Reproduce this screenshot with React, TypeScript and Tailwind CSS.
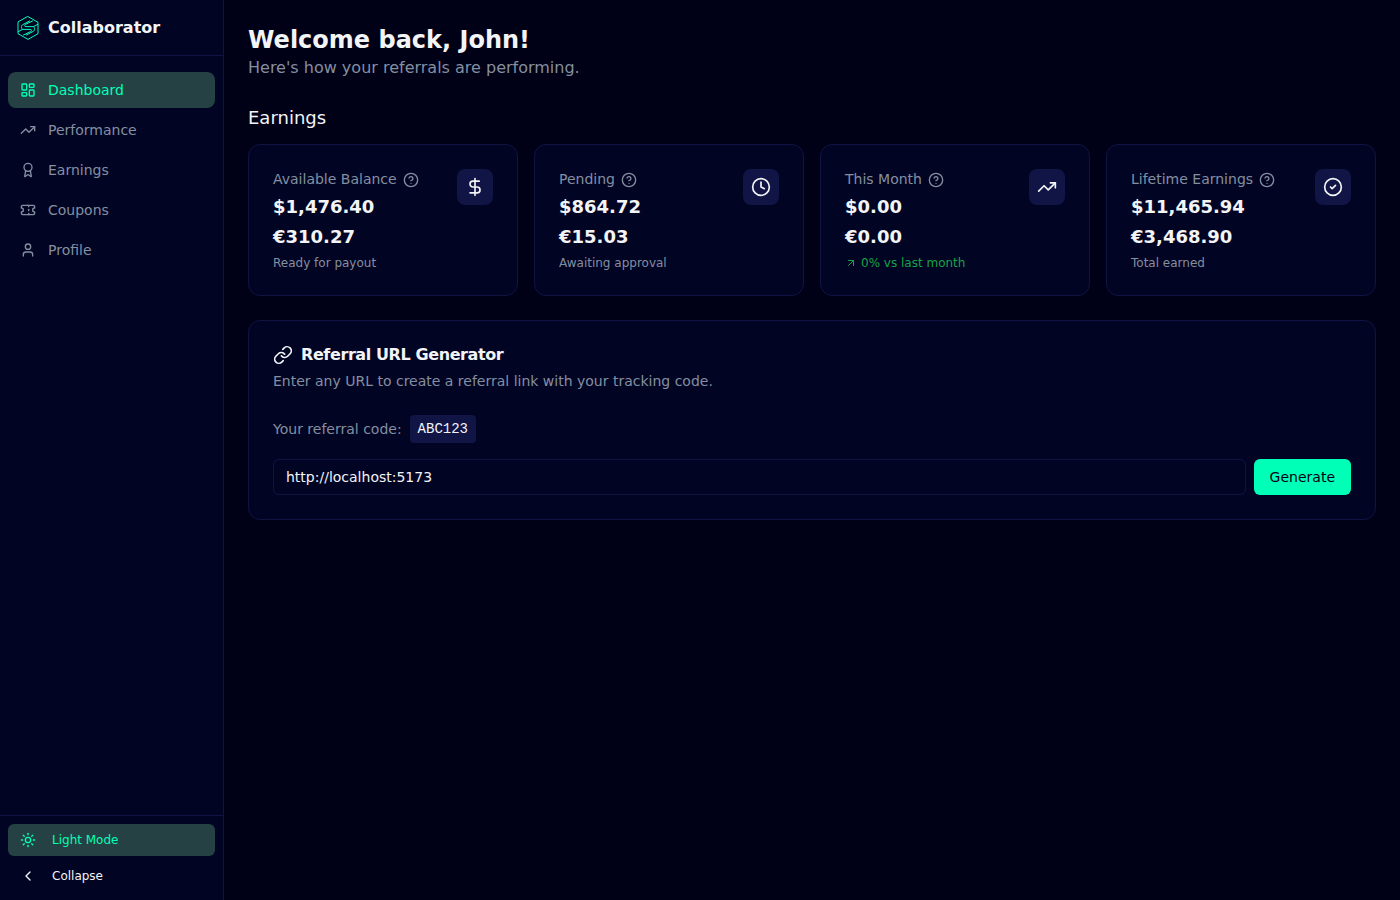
import { useState } from "react";
import type { ReactNode } from "react";
import {
  ArrowUpRight,
  Award,
  ChevronLeft,
  CircleCheck,
  CircleHelp,
  Clock,
  DollarSign,
  LayoutDashboard,
  Link as LinkIcon,
  Sun,
  Ticket,
  TrendingUp,
  User,
} from "lucide-react";
import type { LucideIcon } from "lucide-react";

type NavItem = { label: string; icon: LucideIcon; active?: boolean };

type Stat = {
  label: string;
  values: string[];
  note: string;
  icon: LucideIcon;
  trend?: boolean;
};

const navItems: NavItem[] = [
  { label: "Dashboard", icon: LayoutDashboard, active: true },
  { label: "Performance", icon: TrendingUp },
  { label: "Earnings", icon: Award },
  { label: "Coupons", icon: Ticket },
  { label: "Profile", icon: User },
];

const stats: Stat[] = [
  { label: "Available Balance", values: ["$1,476.40", "€310.27"], note: "Ready for payout", icon: DollarSign },
  { label: "Pending", values: ["$864.72", "€15.03"], note: "Awaiting approval", icon: Clock },
  { label: "This Month", values: ["$0.00", "€0.00"], note: "0% vs last month", icon: TrendingUp, trend: true },
  { label: "Lifetime Earnings", values: ["$11,465.94", "€3,468.90"], note: "Total earned", icon: CircleCheck },
];

function Logo() {
  return (
    <svg
      viewBox="0 0 24 24"
      className="size-6 shrink-0 text-[#00ffb7]"
      fill="none"
      stroke="currentColor"
      strokeWidth="1"
      strokeLinejoin="round"
      strokeLinecap="round"
      aria-hidden="true"
    >
      <path d="M12 0.6 22 6.3v11.4L12 23.4 2 17.7V6.3Z" />
      <path d="M2.2 15.6 6.5 13.4H14.200c1.500 0 1.700 1.500.6 2.100L7.500 19" />
      <path d="M21.8 8.400 17.500 10.600H9.800c-1.500 0-1.700-1.500-.6-2.100L16.500 5" />
      <path d="M6.500 13.400C4.800 12 5 9.600 6.800 8.600L13.500 5" />
      <path d="M17.500 10.600C19.200 12 19 14.400 17.200 15.400L10.500 19" />
    </svg>
  );
}

function Sidebar() {
  return (
    <aside className="flex w-56 shrink-0 flex-col border-r border-[#111442] bg-[#020424]">
      <div className="flex h-14 items-center gap-2 border-b border-[#111442] px-4">
        <Logo />
        <span className="text-base font-bold">Collaborator</span>
      </div>
      <nav className="flex flex-1 flex-col gap-1 px-2 py-4">
        {navItems.map(({ label, icon: Icon, active }) => (
          <a
            key={label}
            href="#"
            aria-current={active ? "page" : undefined}
            className={
              active
                ? "flex h-9 items-center gap-3 rounded-lg bg-[#264143] px-3 text-sm text-[#00ffb7]"
                : "flex h-9 items-center gap-3 rounded-lg px-3 text-sm text-[#848fa0]"
            }
          >
            <Icon className="size-4" />
            {label}
          </a>
        ))}
      </nav>
      <div className="flex flex-col gap-1 border-t border-[#111442] p-2">
        <button type="button" className="flex h-8 items-center gap-4 rounded-md bg-[#264143] px-3 text-xs text-[#00ffb7]">
          <Sun className="size-4" />
          Light Mode
        </button>
        <button type="button" className="flex h-8 items-center gap-4 rounded-md px-3 text-xs">
          <ChevronLeft className="size-4" />
          Collapse
        </button>
      </div>
    </aside>
  );
}

function Card({ children }: { children: ReactNode }) {
  return <div className="rounded-xl border border-[#111442] bg-[#020424] p-6">{children}</div>;
}

function StatCard({ label, values, note, icon: Icon, trend }: Stat) {
  return (
    <Card>
      <div className="flex items-start justify-between">
        <div className="flex flex-col gap-1">
          <div className="flex h-5 items-center gap-1.5 text-sm text-[#848fa0]">
            {label}
            <button type="button" aria-label={`About ${label}`} className="pt-0.5">
              <CircleHelp className="size-4" />
            </button>
          </div>
          <div className="flex flex-col gap-0.5 text-lg font-bold">
            {values.map((value) => (
              <p key={value}>{value}</p>
            ))}
          </div>
          {trend ? (
            <p className="flex items-center gap-1 text-xs text-[#16a34a]">
              <ArrowUpRight className="size-3" />
              {note}
            </p>
          ) : (
            <p className="text-xs text-[#848fa0]">{note}</p>
          )}
        </div>
        <div className="rounded-lg bg-[#111545] p-2">
          <Icon className="size-5" />
        </div>
      </div>
    </Card>
  );
}

function ReferralGenerator() {
  const [url, setUrl] = useState("http://localhost:5173");
  return (
    <Card>
      <h3 className="flex h-5 items-center gap-2 text-base font-bold tracking-tight">
        <LinkIcon className="size-5" />
        Referral URL Generator
      </h3>
      <p className="mt-1.5 text-sm text-[#848fa0]">Enter any URL to create a referral link with your tracking code.</p>
      <div className="mt-6 flex items-center gap-2 text-sm">
        <span className="text-[#848fa0]">Your referral code:</span>
        <code className="rounded bg-[#111545] px-2 py-1 font-['Liberation_Mono',monospace]">ABC123</code>
      </div>
      <form className="mt-4 flex gap-2" onSubmit={(event) => event.preventDefault()}>
        <input
          type="text"
          aria-label="URL"
          value={url}
          onChange={(event) => setUrl(event.target.value)}
          className="h-9 min-w-0 flex-1 rounded-md border border-[#111442] bg-transparent px-3 text-sm outline-none"
        />
        <button type="submit" className="h-9 rounded-md bg-[#00ffb7] px-4 text-sm text-[#020014]">
          Generate
        </button>
      </form>
    </Card>
  );
}

export default function App() {
  return (
    <div className="flex min-h-screen bg-[#000016] font-['DejaVu_Sans',sans-serif] text-[#f3f4f6]">
      <Sidebar />
      <main className="flex min-w-0 flex-1 flex-col gap-6 p-6">
        <header>
          <h1 className="text-2xl font-bold">Welcome back, John!</h1>
          <p className="text-base text-[#848fa0]">Here's how your referrals are performing.</p>
        </header>
        <section className="flex flex-col gap-3">
          <h2 className="text-lg">Earnings</h2>
          <div className="grid grid-cols-4 gap-4">
            {stats.map((stat) => (
              <StatCard key={stat.label} {...stat} />
            ))}
          </div>
        </section>
        <ReferralGenerator />
      </main>
    </div>
  );
}
